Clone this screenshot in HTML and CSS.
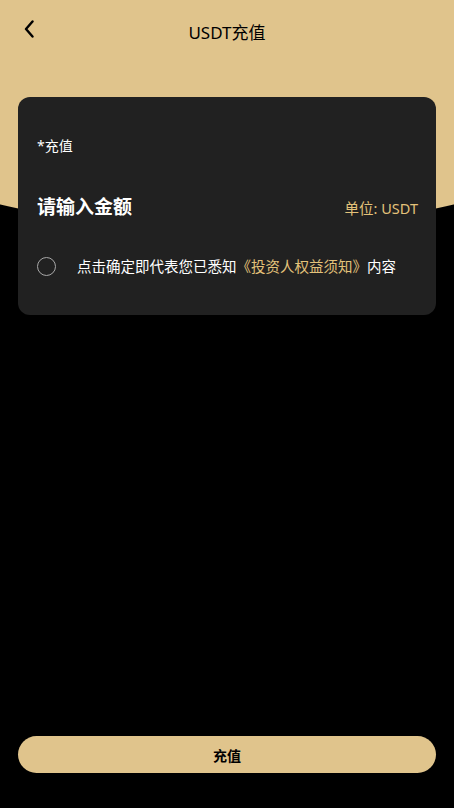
FILE: index.html
```html
<!DOCTYPE html>
<html lang="zh-CN">
<head>
    <meta charset="UTF-8">
    <meta name="viewport" content="width=device-width, initial-scale=1.0">
    <title>USDT充值</title>
    <link rel="stylesheet" href="styles.css">
</head>
<body>
    <header class="topbar">
        <a class="back" href="#">
            <svg width="12" height="18" viewBox="0 0 12 18"><path d="M9.5 1.5 L3 9 L9.5 16.5" fill="none" stroke="#000" stroke-width="2.4" stroke-linecap="round" stroke-linejoin="round"/></svg>
        </a>
        <h1>USDT充值</h1>
    </header>

    <main class="content">
        <form class="card" action="#" method="post">
            <label class="field-label" for="amount">*充值</label>
            <div class="amount-row">
                <input type="text" id="amount" name="amount" placeholder="请输入金额">
                <span class="unit">单位: USDT</span>
            </div>
            <label class="agree" for="agree">
                <input type="checkbox" id="agree" name="agree">
                <span class="circle"></span>
                <span>点击确定即代表您已悉知<a href="#">《投资人权益须知》</a>内容</span>
            </label>
        </form>
    </main>

    <button class="submit" type="button">充值</button>
</body>
</html>
```

FILE: styles.css
```css
body {
    margin: 0;
    min-height: 808px;
    display: flex;
    flex-direction: column;
    background: radial-gradient(ellipse 500px 230px at 50% 0, #e0c48c 99.6%, transparent 100%) no-repeat, #000000;
    font-family: "Noto Sans", "Noto Sans CJK SC", sans-serif;
    color: #ffffff;
}

.topbar {
    height: 62px;
    display: flex;
    align-items: center;
    justify-content: center;
    position: relative;
}

.back {
    position: absolute;
    left: 23px;
    top: 20px;
    display: flex;
}

.topbar h1 {
    margin: 0;
    font-size: 17px;
    font-weight: normal;
    color: #000000;
}

.content {
    padding: 35px 18px 0;
}

.card {
    background: #212121;
    border-radius: 12px;
    padding: 39px 18px 39px 19px;
}

.field-label {
    display: block;
    font-size: 14px;
    line-height: 20px;
}

.amount-row {
    display: flex;
    align-items: center;
    justify-content: space-between;
    margin-top: 38px;
    height: 26px;
}

.amount-row input {
    flex: 1;
    min-width: 0;
    background: transparent;
    border: none;
    outline: none;
    padding: 0;
    font-family: inherit;
    font-size: 19px;
    font-weight: bold;
    color: #ffffff;
}

.amount-row input::placeholder {
    color: #ffffff;
}

.unit {
    font-size: 14.5px;
    color: #e3c27a;
}

.agree {
    display: flex;
    align-items: center;
    gap: 21px;
    margin-top: 36px;
    font-size: 14.5px;
    line-height: 20px;
}

.agree input {
    display: none;
}

.circle {
    width: 17px;
    height: 17px;
    border: 1.5px solid #a8a8a8;
    border-radius: 50%;
    flex-shrink: 0;
}

.agree a {
    color: #e3c27a;
    text-decoration: none;
}

.submit {
    margin: auto 18px 35px;
    height: 37px;
    border: none;
    border-radius: 19px;
    background: #e0c48c;
    font-family: inherit;
    font-size: 14px;
    font-weight: bold;
    color: #000000;
    cursor: pointer;
}
```
